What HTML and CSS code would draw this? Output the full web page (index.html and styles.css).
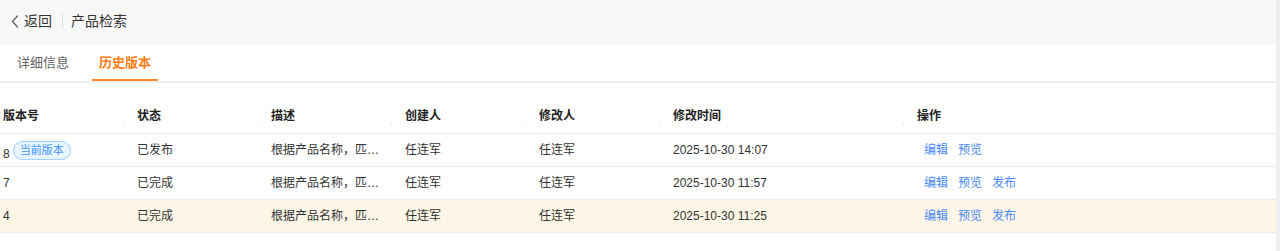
FILE: index.html
```html
<!DOCTYPE html>
<html lang="zh-CN">
<head>
<meta charset="utf-8">
<title>产品检索 - 历史版本</title>
<link rel="stylesheet" href="styles.css">
</head>
<body>
<div class="page">
  <main class="main">
    <header class="topbar">
      <a class="back">
        <svg class="chev" width="8" height="13" viewBox="0 0 8 13"><path d="M6.5 1 L1.5 6.5 L6.5 12" fill="none" stroke="#666" stroke-width="1.3" stroke-linecap="round" stroke-linejoin="round"/></svg>
        <span>返回</span>
      </a>
      <span class="divider"></span>
      <span class="title">产品检索</span>
    </header>
    <nav class="tabs">
      <span class="tab">详细信息</span>
      <span class="tab active">历史版本</span>
    </nav>
    <section class="table-wrap">
      <table class="table">
        <colgroup>
          <col class="c-n"><col class="c-n"><col class="c-n"><col class="c-n"><col class="c-n"><col class="c-time"><col>
        </colgroup>
        <thead>
          <tr>
            <th>版本号</th><th>状态</th><th>描述</th><th>创建人</th><th>修改人</th><th>修改时间</th><th class="op-h">操作</th>
          </tr>
        </thead>
        <tbody>
          <tr>
            <td><div class="ver"><span class="num">8</span><span class="badge">当前版本</span></div></td>
            <td>已发布</td>
            <td><div class="desc">根据产品名称，匹…</div></td>
            <td>任连军</td>
            <td>任连军</td>
            <td>2025-10-30 14:07</td>
            <td><div class="ops"><a>编辑</a><a>预览</a></div></td>
          </tr>
          <tr>
            <td>7</td>
            <td>已完成</td>
            <td><div class="desc">根据产品名称，匹…</div></td>
            <td>任连军</td>
            <td>任连军</td>
            <td>2025-10-30 11:57</td>
            <td><div class="ops"><a>编辑</a><a>预览</a><a>发布</a></div></td>
          </tr>
          <tr class="hl">
            <td>4</td>
            <td>已完成</td>
            <td><div class="desc">根据产品名称，匹…</div></td>
            <td>任连军</td>
            <td>任连军</td>
            <td>2025-10-30 11:25</td>
            <td><div class="ops"><a>编辑</a><a>预览</a><a>发布</a></div></td>
          </tr>
        </tbody>
      </table>
    </section>
  </main>
  <div class="rail"></div>
</div>
</body>
</html>
```

FILE: styles.css
```css
* { box-sizing: border-box; }
html, body { margin: 0; padding: 0; }
body {
  font-family: "Liberation Sans", "Noto Sans CJK SC", sans-serif;
  color: #333;
  background: #fff;
  font-size: 12px;
}
.page {
  display: flex;
  min-height: 251px;
}
.main {
  flex: 1;
  min-width: 0;
  background: #fff;
}
.rail {
  width: 4px;
  background: #efeff2;
}
.topbar {
  height: 45px;
  background: #f8f8f8;
  display: flex;
  align-items: center;
  padding: 0 0 3px 11px;
  font-size: 14px;
  line-height: 18px;
  color: #333;
}
.back {
  display: flex;
  align-items: center;
  gap: 5px;
  color: #333;
}
.chev { display: block; }
.divider {
  width: 1px;
  height: 14px;
  background: #dcdcdc;
  margin: 0 8px 0 10px;
}
.tabs {
  height: 38px;
  border-bottom: 2px solid #eeeef2;
  display: flex;
  gap: 16px;
  padding-left: 10px;
}
.tab {
  padding: 0 7px;
  height: 36px;
  line-height: 36px;
  font-size: 13px;
  color: #666;
}
.tab.active {
  color: #ff7d12;
  font-weight: 600;
  border-bottom: 2px solid #ff8a24;
}
.table-wrap {
  padding-top: 17px;
}
.table {
  width: 100%;
  border-collapse: collapse;
  table-layout: fixed;
}
.c-n { width: 134px; }
.c-time { width: 244px; }
th {
  position: relative;
  text-align: left;
  font-weight: 600;
  color: #222;
  height: 33px;
  padding: 0 3px;
  line-height: 32px;
  border-bottom: 1px solid #e8e8ec;
}
th:not(:last-child)::after {
  content: "";
  position: absolute;
  right: 10px;
  bottom: 7px;
  width: 1px;
  height: 4px;
  background: #f2f3f6;
}
td {
  height: 33px;
  padding: 0 3px;
  line-height: 32px;
  border-bottom: 1px solid #ebebef;
  white-space: nowrap;
  color: #333;
}
tr.hl td { background: #fdf6e6; }
.desc {
  overflow: hidden;
  white-space: nowrap;
}
.ver {
  display: flex;
  align-items: flex-end;
  height: 32px;
  padding-bottom: 6px;
}
.num { line-height: 12px; }
.badge {
  margin-left: 3px;
  display: inline-block;
  height: 19px;
  line-height: 17px;
  padding: 0 6px;
  font-size: 11px;
  color: #4096ff;
  background: #e8f4ff;
  border: 1px solid #9fd0ff;
  border-radius: 10px;
}
.ops {
  display: flex;
  gap: 10px;
  padding-left: 7px;
}
.ops a {
  color: #4a88f4;
  cursor: pointer;
}
```
